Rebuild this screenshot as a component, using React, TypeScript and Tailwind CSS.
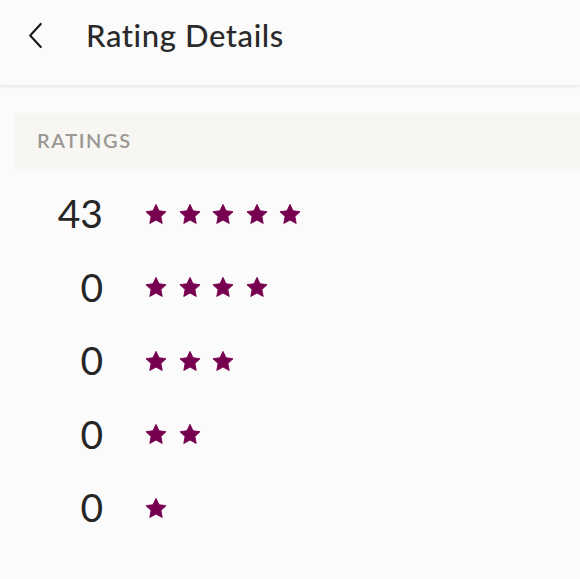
import React from "react";

const COUNTS = [
  { stars: 5, count: 43 },
  { stars: 4, count: 0 },
  { stars: 3, count: 0 },
  { stars: 2, count: 0 },
  { stars: 1, count: 0 },
];

function Star() {
  return (
    <svg viewBox="0 0 24 24" className="h-[22px] w-[22px]" fill="#76004f" stroke="#76004f" strokeWidth="1" strokeLinejoin="round">
      <path d="M12 1.5L15.29 8.47 22.94 9.45 17.33 14.73 18.76 22.3 12 18.6 5.24 22.3 6.67 14.73 1.06 9.45 8.71 8.47z" />
    </svg>
  );
}

export default function App() {
  return (
    <div className="min-h-[579px] w-full bg-[#fbfbfb] font-['Lato','Noto_Sans',sans-serif]">
      {/* header */}
      <div className="relative flex h-[85px] items-center pb-[14px] shadow-[0_2px_3px_rgba(0,0,0,0.08)]">
        <button className="ml-[26px] flex h-[30px] w-[18px] items-center justify-center text-[#1a1a1a]">
          <svg viewBox="0 0 16 28" className="h-[27px] w-[16px]" fill="none" stroke="currentColor" strokeWidth="2.2" strokeLinecap="round" strokeLinejoin="round">
            <path d="M14 2L3 14l11 12" />
          </svg>
        </button>
        <h1 className="ml-[42px] text-[31px] font-medium tracking-[0.6px] text-[#2a2a2a]">
          Rating Details
        </h1>
      </div>

      <div className="mt-[28px] ml-[15px] flex h-[56px] items-center bg-[#f7f6f3] pl-[22px] pb-[3px]">
        <span className="text-[20px] font-semibold tracking-[1.6px] text-[#9b9894]">RATINGS</span>
      </div>

      <div className="mt-[8px] flex flex-col">
        {COUNTS.map((r) => (
          <div key={r.stars} className="flex h-[73.5px] items-center">
            <div className="w-[103px] text-right text-[39px] font-normal leading-none text-[#262626]">
              {r.count}
            </div>
            <div className="ml-[42px] flex gap-[11.5px]">
              {Array.from({ length: r.stars }).map((_, i) => (
                <Star key={i} />
              ))}
            </div>
          </div>
        ))}
      </div>
    </div>
  );
}
